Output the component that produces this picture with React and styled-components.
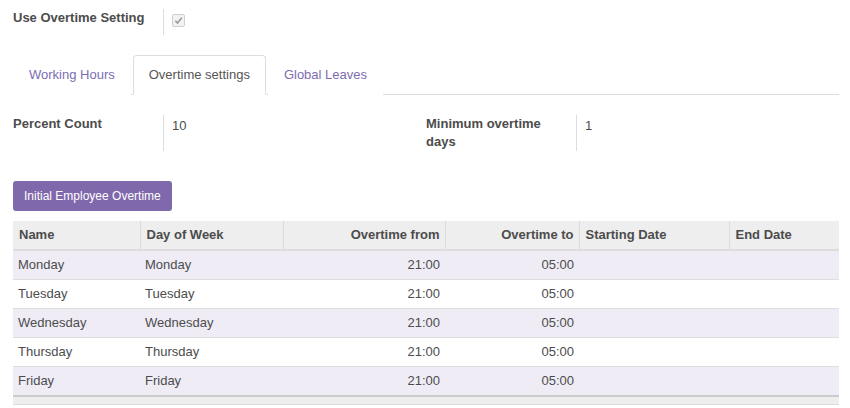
import React from "react";
import styled, { createGlobalStyle } from "styled-components";

const Global = createGlobalStyle`
  html, body { margin: 0; padding: 0; background: #fff; }
  body {
    font-family: "Liberation Sans", Arial, sans-serif;
    font-size: 13px;
    line-height: 18px;
    color: #4c4c4c;
  }
`;

const Page = styled.div`
  padding: 9px 11px 0 13px;
`;

const FieldRow = styled.div`
  display: flex;
  min-height: 26px;
`;

const Label = styled.div`
  width: 150px;
  flex: none;
  font-weight: bold;
  color: #4c4c4c;
`;

const Value = styled.div`
  flex: 1;
  border-left: 1px solid #ddd;
  padding-left: 8px;
  padding-top: ${(p) => p.$pt || 1}px;
`;

const Check = styled.span`
  display: inline-block;
  width: 11px;
  height: 11px;
  border: 1px solid #cfcfcf;
  border-radius: 2px;
  background: #f2f2f2;
  position: relative;
  svg { position: absolute; left: 1px; top: 1px; }
`;

const Tabs = styled.div`
  display: flex;
  margin-top: 20px;
  border-bottom: 1px solid #ddd;
`;

const Tab = styled.div`
  padding: 10px 15px;
  line-height: 18px;
  margin-bottom: -1px;
  margin-right: 2px;
  border: 1px solid ${(p) => (p.$active ? "#ddd" : "transparent")};
  border-bottom-color: ${(p) => (p.$active ? "#fff" : "transparent")};
  border-radius: 4px 4px 0 0;
  background: #fff;
  color: ${(p) => (p.$active ? "#555" : "#7c6db3")};
`;

const Groups = styled.div`
  display: grid;
  grid-template-columns: 413px 1fr;
  margin-top: 20px;
`;

const Button = styled.button`
  margin-top: 30px;
  font-family: inherit;
  font-size: 12px;
  line-height: 18px;
  color: #fff;
  background: #7f68ac;
  border: none;
  border-radius: 3px;
  padding: 6px 11px 6px 11px;
  display: block;
`;

const Table = styled.table`
  margin-top: 10px;
  width: 100%;
  border-collapse: collapse;
  table-layout: fixed;
`;

const Th = styled.th`
  background: #eeeeee;
  font-weight: bold;
  text-align: ${(p) => (p.$right ? "right" : "left")};
  padding: 5px 5px 5px 6px;
  height: 18px;
  border-bottom: 2px solid #dcdcdc;
  border-right: ${(p) => (p.$last ? "none" : "1px solid #dcdcdc")};
  white-space: nowrap;
`;

const Tr = styled.tr`
  background: ${(p) => (p.$odd ? "#efecf6" : "#fff")};
  border-bottom: 1px solid #dddddd;
  &:last-child { border-bottom: none; }
`;

const Td = styled.td`
  padding: 5px 5px 5px 5px;
  height: 18px;
  text-align: ${(p) => (p.$right ? "right" : "left")};
`;

const FootCell = styled.td`
  height: 7px;
  padding: 0;
  background: #eeeeee;
  border-top: 2px solid #cbcbcb;
  border-bottom: 1px solid #dcdcdc;
`;

const rows = ["Monday", "Tuesday", "Wednesday", "Thursday", "Friday"];

export default function App() {
  return (
    <>
      <Global />
      <Page>
        <FieldRow>
          <Label>Use Overtime Setting</Label>
          <Value $pt={5}>
            <Check>
              <svg width="9" height="9" viewBox="0 0 9 9">
                <path d="M1.3 4.8 L3.5 7 L7.8 1.8" fill="none" stroke="#9a9a9a" strokeWidth="1.6" />
              </svg>
            </Check>
          </Value>
        </FieldRow>

        <Tabs>
          <Tab>Working Hours</Tab>
          <Tab $active>Overtime settings</Tab>
          <Tab>Global Leaves</Tab>
        </Tabs>

        <Groups>
          <FieldRow>
            <Label>Percent Count</Label>
            <Value $pt={2}>10</Value>
          </FieldRow>
          <FieldRow>
            <Label>
              Minimum overtime
              <br />
              days
            </Label>
            <Value $pt={2}>1</Value>
          </FieldRow>
        </Groups>

        <Button>Initial Employee Overtime</Button>

        <Table>
          <colgroup>
            <col style={{ width: 127 }} />
            <col style={{ width: 143 }} />
            <col style={{ width: 162 }} />
            <col style={{ width: 134 }} />
            <col style={{ width: 150 }} />
            <col />
          </colgroup>
          <thead>
            <tr>
              <Th>Name</Th>
              <Th>Day of Week</Th>
              <Th $right>Overtime from</Th>
              <Th $right>Overtime to</Th>
              <Th>Starting Date</Th>
              <Th $last>End Date</Th>
            </tr>
          </thead>
          <tbody>
            {rows.map((d, i) => (
              <Tr key={d} $odd={i % 2 === 0}>
                <Td>{d}</Td>
                <Td>{d}</Td>
                <Td $right>21:00</Td>
                <Td $right>05:00</Td>
                <Td />
                <Td />
              </Tr>
            ))}
          </tbody>
          <tfoot>
            <tr>
              <FootCell colSpan={6} />
            </tr>
          </tfoot>
        </Table>
      </Page>
    </>
  );
}
